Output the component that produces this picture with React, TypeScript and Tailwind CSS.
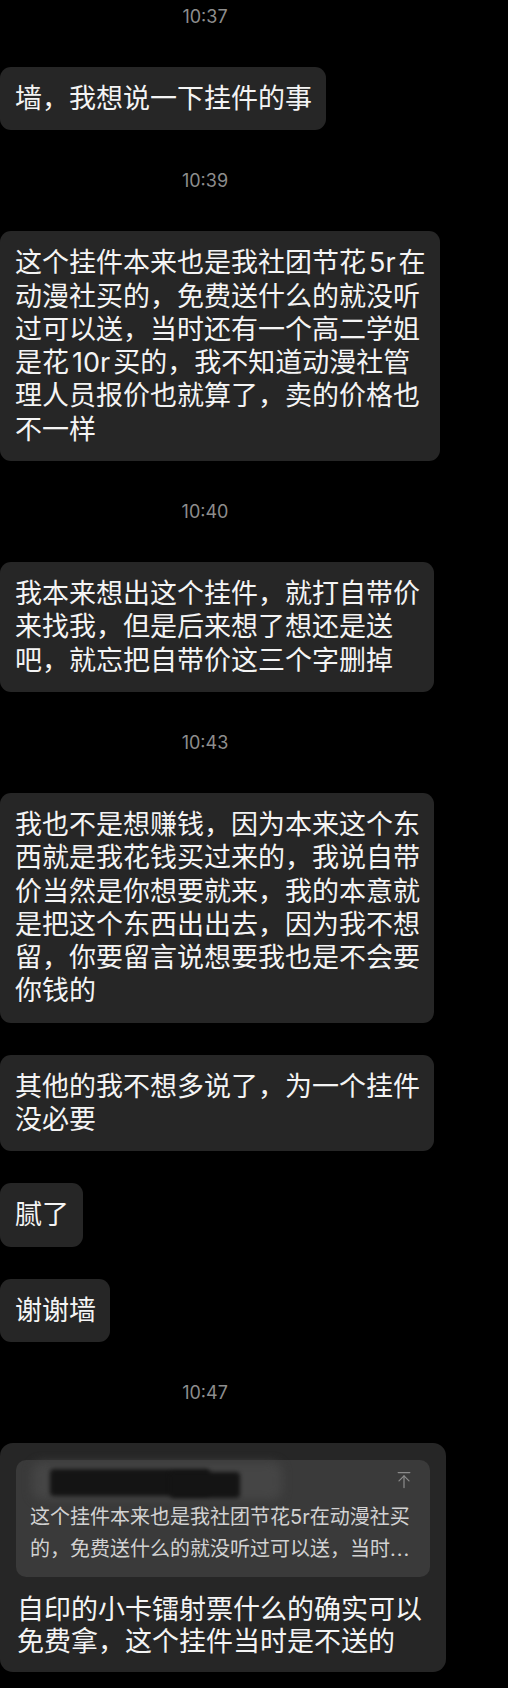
import React from 'react';
import { ArrowUpToLine } from 'lucide-react';

const FONT = { fontFamily: 'Inter, "Noto Sans CJK SC", sans-serif' };

function Time({ t, first }: { t: string; first?: boolean }) {
  return (
    <div
      className={`w-[410px] text-center text-[18px] leading-[24px] text-[#8d8d8d] mb-[38px] ${
        first ? '' : 'mt-[39px]'
      }`}
    >
      {t}
    </div>
  );
}

// latin run inside cjk text, iOS adds a hair of space around it
function L({ children }: { children: React.ReactNode }) {
  return <span className="mx-[3px]">{children}</span>;
}

function Bubble({ lines, gap }: { lines: React.ReactNode[]; gap?: boolean }) {
  return (
    <div
      className={`w-fit rounded-[11px] bg-[#262626] pl-[15px] pr-[14px] py-[15px] text-[27px] leading-[33.3px] text-[#f4f4f4] ${
        gap ? 'mt-[32px]' : ''
      }`}
    >
      {lines.map((l, i) => (
        <div key={i} className="whitespace-nowrap">
          {l}
        </div>
      ))}
    </div>
  );
}

function ReplyBubble() {
  return (
    <div className="w-[446px] rounded-[13px] bg-[#262626] px-[16px] pt-[17px] pb-[14px] text-[#f4f4f4]">
      <div className="rounded-[10px] bg-[#3a3a3a] px-[14px] pb-[12px]">
        <div className="flex h-[41px] items-center justify-between">
          <div className="relative h-[41px] w-[260px]">
            <div className="absolute left-[2px] top-[2px] h-[38px] w-[250px] rounded-[10px] bg-[#454545] blur-[5px]" />
            <div className="absolute left-[20px] top-[9px] h-[27px] w-[160px] rounded-[4px] bg-[#141414] blur-[2px]" />
            <div className="absolute left-[140px] top-[12px] h-[26px] w-[70px] rounded-[4px] bg-[#141414] blur-[2px]" />
          </div>
          <ArrowUpToLine className="mr-[2px] h-[20px] w-[20px] text-[#8a8a8a]" strokeWidth={1.5} />
        </div>
        <div className="text-[20px] leading-[32px] text-[#d2d2d2]">
          <div className="whitespace-nowrap">这个挂件本来也是我社团节花5r在动漫社买</div>
          <div className="whitespace-nowrap">
            的，免费送什么的就没听过可以送，当时<span className="tracking-[1px]">...</span>
          </div>
        </div>
      </div>
      <div className="mt-[17px] pl-[1px] text-[27px] leading-[32px]">
        <div className="whitespace-nowrap">自印的小卡镭射票什么的确实可以</div>
        <div className="whitespace-nowrap">免费拿，这个挂件当时是不送的</div>
      </div>
    </div>
  );
}

export default function App() {
  return (
    <div className="min-h-screen w-full bg-black pt-[5px]" style={FONT}>
      <Time t="10:37" first />
      <Bubble lines={['墙，我想说一下挂件的事']} />

      <Time t="10:39" />
      <Bubble
        lines={[
          <>这个挂件本来也是我社团节花<L>5r</L>在</>,
          '动漫社买的，免费送什么的就没听',
          '过可以送，当时还有一个高二学姐',
          <>是花<L>10r</L>买的，我不知道动漫社管</>,
          '理人员报价也就算了，卖的价格也',
          '不一样',
        ]}
      />

      <Time t="10:40" />
      <Bubble
        lines={[
          '我本来想出这个挂件，就打自带价',
          '来找我，但是后来想了想还是送',
          '吧，就忘把自带价这三个字删掉',
        ]}
      />

      <Time t="10:43" />
      <Bubble
        lines={[
          '我也不是想赚钱，因为本来这个东',
          '西就是我花钱买过来的，我说自带',
          '价当然是你想要就来，我的本意就',
          '是把这个东西出出去，因为我不想',
          '留，你要留言说想要我也是不会要',
          '你钱的',
        ]}
      />
      <Bubble gap lines={['其他的我不想多说了，为一个挂件', '没必要']} />
      <Bubble gap lines={['腻了']} />
      <Bubble gap lines={['谢谢墙']} />

      <Time t="10:47" />
      <ReplyBubble />
    </div>
  );
}
